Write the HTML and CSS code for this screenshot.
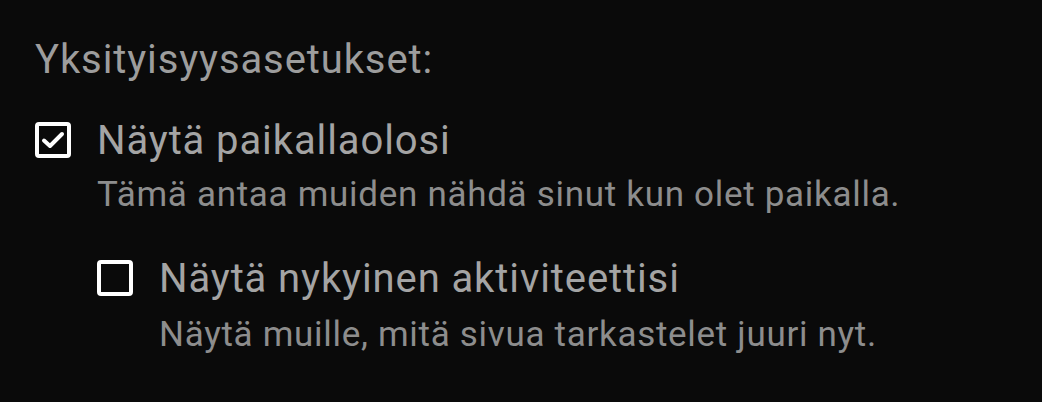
FILE: index.html
```html
<!DOCTYPE html>
<html lang="fi">
<head>
<meta charset="utf-8">
<link rel="stylesheet" href="styles.css">
</head>
<body>
<div class="panel">
  <div class="heading">Yksityisyysasetukset:</div>
  <div class="option">
    <div class="row">
      <span class="box checked">
        <svg viewBox="0 0 28 28" width="28" height="28"><path d="M5 14.5l6 5.5L23 8" fill="none" stroke="#fff" stroke-width="4" stroke-linecap="round" stroke-linejoin="round"/></svg>
      </span>
      <span class="label">Näytä paikallaolosi</span>
    </div>
    <div class="desc">Tämä antaa muiden nähdä sinut kun olet paikalla.</div>
  </div>
  <div class="option nested">
    <div class="row">
      <span class="box"></span>
      <span class="label">Näytä nykyinen aktiviteettisi</span>
    </div>
    <div class="desc">Näytä muille, mitä sivua tarkastelet juuri nyt.</div>
  </div>
</div>
</body>
</html>
```
FILE: styles.css
```css
html, body {
  margin: 0;
  padding: 0;
  background: #0a0a0a;
  width: 1042px;
  height: 402px;
  overflow: hidden;
}
.panel {
  padding: 36px 0 0 35px;
  font-family: Roboto, "Noto Sans", sans-serif;
}
.heading {
  font-size: 40px;
  line-height: 48px;
  letter-spacing: 0.9px;
  color: #9d9d9d;
}
.option {
  margin-top: 31px;
}
.option.nested {
  margin-left: 62px;
  margin-top: 36px;
}
.row {
  display: flex;
  align-items: center;
  gap: 26px;
}
.box {
  box-sizing: border-box;
  width: 36px;
  height: 36px;
  border: 4px solid #fff;
  border-radius: 4px;
  display: flex;
  align-items: center;
  justify-content: center;
  flex: none;
}
.box svg {
  display: block;
  flex: none;
}
.label {
  font-size: 40px;
  line-height: 48px;
  padding-top: 2px;
  letter-spacing: 0.9px;
  color: #a4a4a4;
}
.desc {
  margin-left: 62px;
  margin-top: 8px;
  font-size: 35px;
  line-height: 44px;
  letter-spacing: 0.7px;
  color: #8d8d8d;
}
.nested .desc {
  margin-top: 10px;
}
```
